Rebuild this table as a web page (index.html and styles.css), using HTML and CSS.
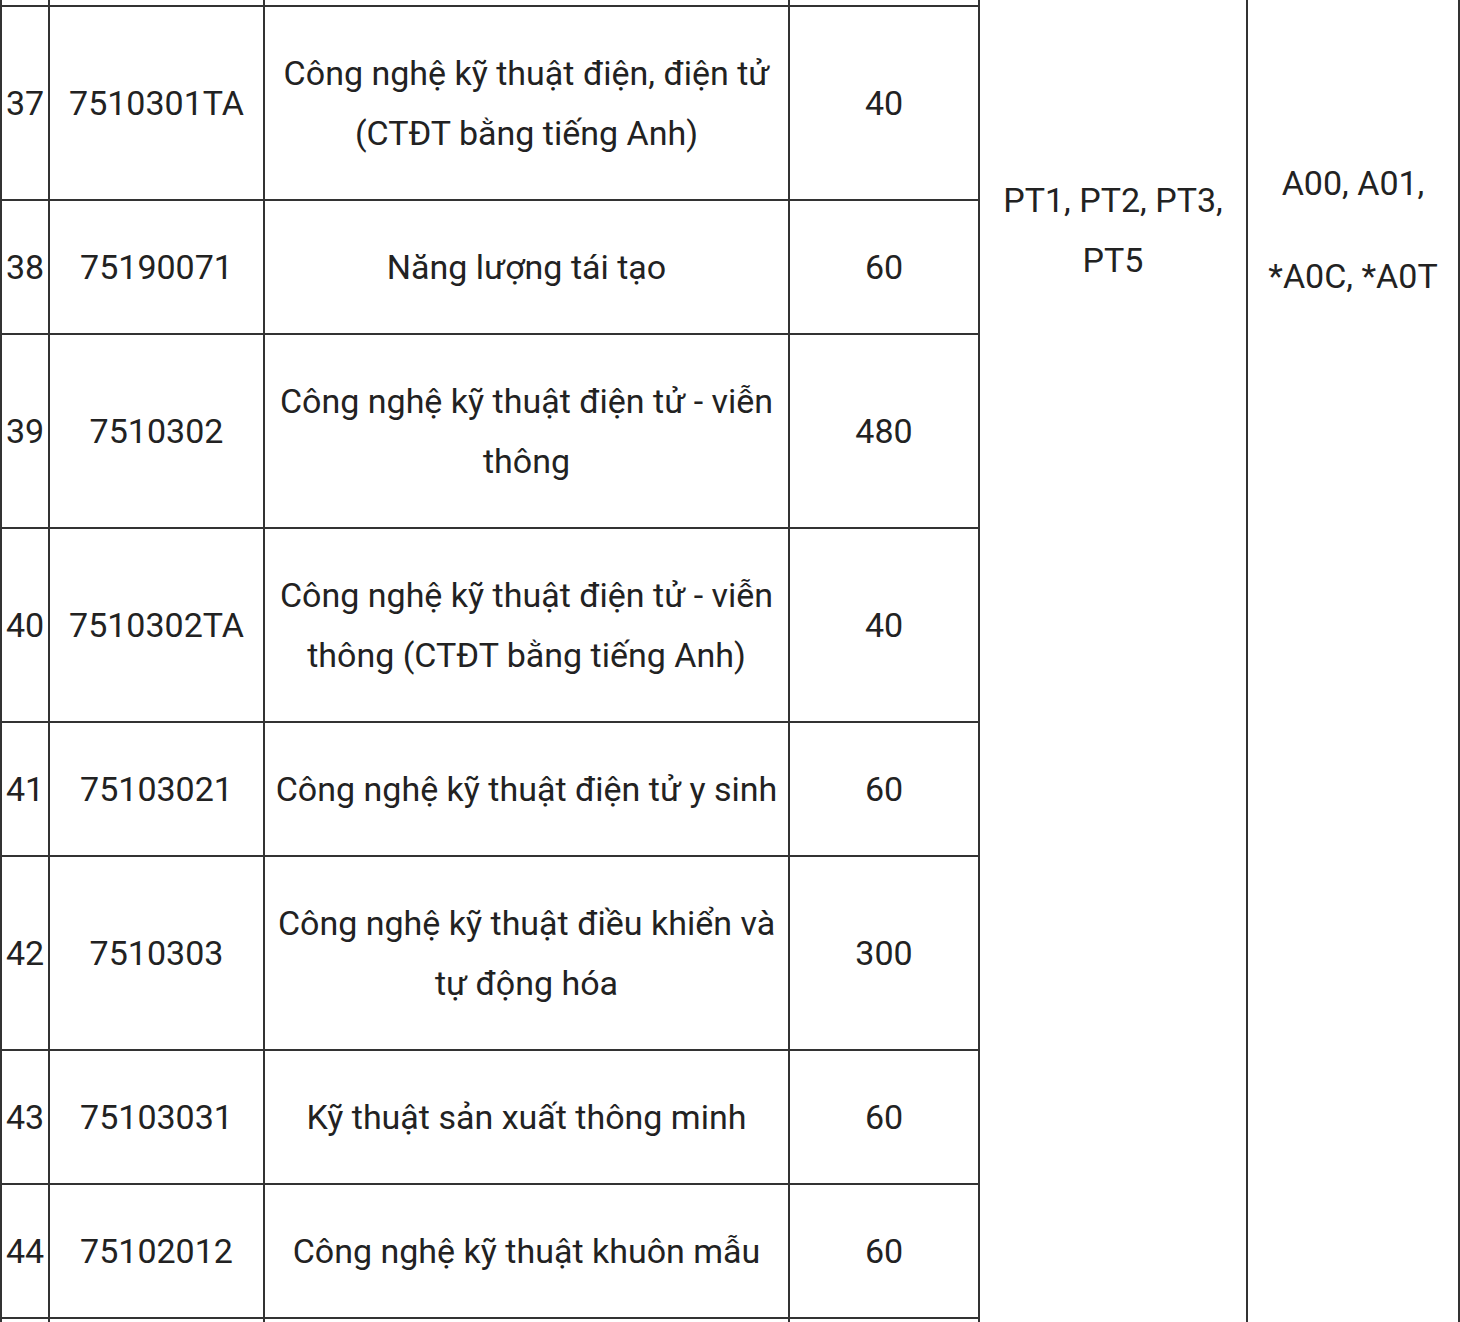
FILE: index.html
```html
<!DOCTYPE html>
<html lang="vi">
<head>
<meta charset="utf-8">
<title>Bảng ngành tuyển sinh</title>
<link rel="stylesheet" href="styles.css">
</head>
<body>
<div class="sheet">
  <div class="cell span method">PT1, PT2, PT3,<br>PT5</div>
  <div class="cell span combo"><span class="ln">A00, A01,</span><span class="ln second">*A0C, *A0T</span></div>

  <div class="cell stub"></div><div class="cell stub"></div><div class="cell stub"></div><div class="cell stub"></div>

  <div class="cell no">37</div><div class="cell">7510301TA</div><div class="cell">Công nghệ kỹ thuật điện, điện tử<br>(CTĐT bằng tiếng Anh)</div><div class="cell">40</div>
  <div class="cell no">38</div><div class="cell">75190071</div><div class="cell">Năng lượng tái tạo</div><div class="cell">60</div>
  <div class="cell no">39</div><div class="cell">7510302</div><div class="cell">Công nghệ kỹ thuật điện tử - viễn<br>thông</div><div class="cell">480</div>
  <div class="cell no">40</div><div class="cell">7510302TA</div><div class="cell">Công nghệ kỹ thuật điện tử - viễn<br>thông (CTĐT bằng tiếng Anh)</div><div class="cell">40</div>
  <div class="cell no">41</div><div class="cell">75103021</div><div class="cell">Công nghệ kỹ thuật điện tử y sinh</div><div class="cell">60</div>
  <div class="cell no">42</div><div class="cell">7510303</div><div class="cell">Công nghệ kỹ thuật điều khiển và<br>tự động hóa</div><div class="cell">300</div>
  <div class="cell no">43</div><div class="cell">75103031</div><div class="cell">Kỹ thuật sản xuất thông minh</div><div class="cell">60</div>
  <div class="cell no">44</div><div class="cell">75102012</div><div class="cell">Công nghệ kỹ thuật khuôn mẫu</div><div class="cell">60</div>

  <div class="cell tail"></div><div class="cell tail"></div><div class="cell tail"></div><div class="cell tail"></div>
</div>
</body>
</html>
```

FILE: styles.css
```css
html, body {
  margin: 0;
  padding: 0;
  background: #fff;
  overflow: hidden;
}

body {
  font-family: Roboto, "Noto Sans", sans-serif;
  font-size: 34px;
  line-height: 60px;
  color: #222;
}

.sheet {
  display: grid;
  grid-template-columns: 48px 215px 525px 190px 268px 212px;
  border-left: 2px solid #333;
  width: 1458px;
}

.cell {
  border-right: 2px solid #333;
  border-bottom: 2px solid #333;
  padding: 36px 0;
  text-align: center;
  white-space: nowrap;
  display: flex;
  flex-direction: column;
  justify-content: center;
}

.stub {
  padding: 0;
  height: 5px;
}

.tail {
  padding: 0;
  height: 60px;
  border-bottom: none;
}

.span {
  grid-row: 1 / span 10;
  border-bottom: none;
  justify-content: flex-start;
  padding: 0;
}

.method {
  grid-column: 5;
  padding-top: 170px;
  display: block;
}

.combo {
  grid-column: 6;
  padding-top: 153px;
}

.ln {
  display: block;
}

.ln.second {
  margin-top: 33px;
}
```
